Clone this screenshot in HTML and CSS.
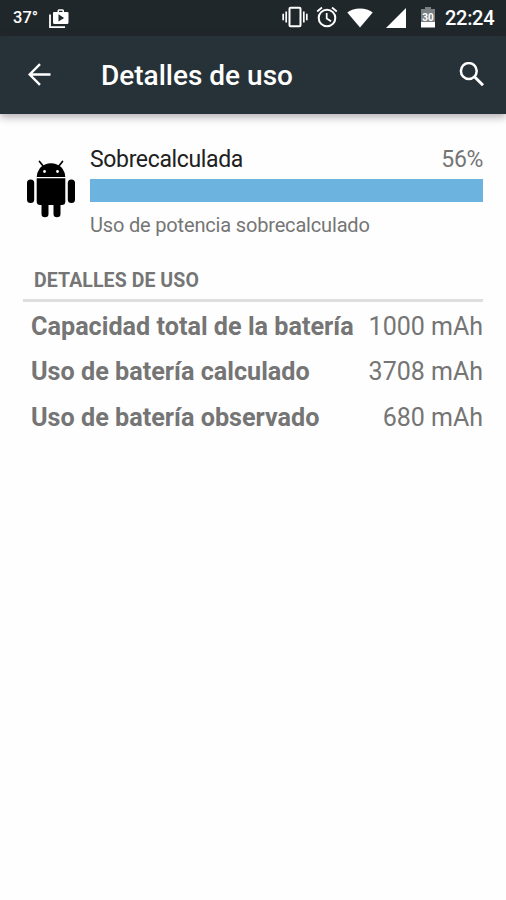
FILE: index.html
```html
<!DOCTYPE html>
<html lang="es">
<head>
<meta charset="utf-8">
<title>Detalles de uso</title>
<link rel="stylesheet" href="styles.css">
</head>
<body>
<header class="status-bar">
  <span class="temperature">37°</span>
  <svg class="store-icon" viewBox="0 0 20 20"><path d="M1 5.5V18.2H16" fill="none" stroke="#fff" stroke-width="1.8"/><path fill="#fff" fill-rule="evenodd" d="M8.5 3V1.8Q8.5.2 10 .2h3.5Q15 .2 15 1.800V3h3.500q1 0 1 1v9.500q0 1.500-1.500 1.500H5.500Q4 15 4 13.500V4q0-1 1-1zM10 3h3.500V1.700H10zM9.500 5.300v7.200l5.600-3.600z"/></svg>
  <div class="status-icons">
    <svg class="vibrate-icon" viewBox="0 0 26 22"><path d="M1.200 7.800v6.400M4.200 5.500v11M21.800 5.500v11M24.800 7.800v6.400" stroke="#fff" stroke-width="1.700"/><rect x="7.500" y="1.800" width="11" height="18.400" rx="1" fill="none" stroke="#fff" stroke-width="2"/></svg>
    <svg class="alarm-icon" viewBox="0 0 22 22"><circle cx="11" cy="12" r="8.300" fill="none" stroke="#fff" stroke-width="2"/><path d="M1.200 5.500L6 1.500M20.800 5.500L16 1.500M10.700 7v5.500l4.300 2.700" fill="none" stroke="#fff" stroke-width="1.700"/></svg>
    <svg class="wifi-icon" viewBox="0 0 26 20"><path d="M.3 4.500Q5.500.4 13 .4t12.700 4.100L13 19.600z" fill="#fff"/></svg>
    <svg class="signal-icon" viewBox="0 0 20 20"><path d="M20 0v20H0z" fill="#fff"/></svg>
    <svg class="battery-icon" viewBox="0 0 14 21"><path d="M4 0h6v2h4v13H0V2h4z" fill="#7b8083"/><path d="M0 15h14v5.500H0z" fill="#fff"/><text class="battery-level" x="7" y="14">30</text></svg>
  </div>
  <time class="clock">22:24</time>
</header>
<nav class="app-bar">
  <svg class="back-icon" viewBox="0 0 24 24"><path d="M23.500 11.500H2.500M13 1.200L2.700 11.500 13 21.800" fill="none" stroke="#fff" stroke-width="2.400"/></svg>
  <h1 class="title">Detalles de uso</h1>
  <svg class="search-icon" viewBox="0 0 26 26"><circle cx="9.800" cy="9" r="7.900" fill="none" stroke="#fff" stroke-width="2.500"/><path d="M15.500 14.800l8.500 8.500" stroke="#fff" stroke-width="3"/></svg>
</nav>
<main class="content">
  <section class="summary">
    <svg class="android-icon" viewBox="0 0 48 58"><path d="M12.500 1.500l4 5M35.500 1.500l-4 5" stroke="#000" stroke-width="1.700" stroke-linecap="round"/><path d="M9.700 17Q10.200 8 18 4.500q6-2.300 12 0Q37.800 8 38.300 17z"/><rect y="19.500" width="7.200" height="23.500" rx="3.500"/><rect x="40.800" y="19.500" width="7.200" height="23.500" rx="3.500"/><path d="M9.700 18.200h28.600v23.300q0 3.500-3.500 3.500H33.500v9q0 3.300-3.500 3.300T26.500 54v-9h-5v9q0 3.300-3.500 3.300T14.500 54v-9h-1.300Q9.700 45 9.700 41.500z"/><circle cx="17.500" cy="11.500" r="1.400" fill="#fff"/><circle cx="30.500" cy="11.500" r="1.400" fill="#fff"/></svg>
    <div class="usage">
      <div class="usage-head"><span class="usage-name">Sobrecalculada</span><span class="usage-percent">56%</span></div>
      <div class="usage-bar"></div>
      <p class="usage-note">Uso de potencia sobrecalculado</p>
    </div>
  </section>
  <h2 class="section-title">DETALLES DE USO</h2>
  <dl class="details">
    <div class="row"><dt>Capacidad total de la batería</dt><dd>1000 mAh</dd></div>
    <div class="row"><dt>Uso de batería calculado</dt><dd>3708 mAh</dd></div>
    <div class="row"><dt>Uso de batería observado</dt><dd>680 mAh</dd></div>
  </dl>
</main>
</body>
</html>
```
FILE: styles.css
```css
* { box-sizing: border-box; margin: 0; padding: 0; }
body { background: #fefefe; font-family: Roboto, sans-serif; color: #757575; min-height: 900px; }
svg { display: block; flex: none; }
.status-bar { height: 36px; background: #20272b; color: #fff; display: flex; align-items: flex-start; padding: 0 12px 0 13px; }
.temperature { width: 36px; font-size: 16.500px; font-weight: 500; line-height: 36px; }
.store-icon { width: 20px; height: 20px; margin-top: 9px; }
.status-icons { margin-left: auto; display: flex; align-items: flex-start; }
.vibrate-icon { width: 26px; height: 22px; margin-top: 6px; }
.alarm-icon { width: 22px; height: 22px; margin: 6px 0 0 8px; }
.wifi-icon { width: 26px; height: 20px; margin: 8px 0 0 9px; }
.signal-icon { width: 20px; height: 20px; margin: 8px 0 0 13px; }
.battery-icon { width: 14px; height: 21px; margin: 7px 0 0 15px; }
.battery-level { font-size: 10px; font-weight: 700; fill: #fff; text-anchor: middle; }
.clock { margin-left: 10px; width: 49px; font-size: 20px; font-weight: 500; letter-spacing: -.3px; line-height: 37px; white-space: nowrap; }
.app-bar { height: 78px; background: #263238; display: flex; align-items: center; padding: 0 21px 0 27px; color: #fff; box-shadow: 0 3px 8px rgba(50, 35, 50, .38); }
.back-icon { width: 24px; height: 24px; }
.title { margin-left: 50px; padding-top: 2px; font-size: 28px; font-weight: 500; line-height: 34px; white-space: nowrap; }
.search-icon { width: 26px; height: 26px; margin-left: auto; }
.content { padding: 32px 23px 0; }
.summary { display: flex; padding-left: 4px; height: 120px; }
.android-icon { width: 48px; height: 58px; margin-top: 14px; }
.usage { flex: 1; margin-left: 15px; }
.usage-head { display: flex; justify-content: space-between; font-size: 23px; letter-spacing: -.35px; line-height: 28px; height: 33px; }
.usage-name { color: #212121; }
.usage-bar { height: 23px; background: #6db3e0; }
.usage-note { margin-top: 11px; font-size: 20px; letter-spacing: -.17px; line-height: 24px; white-space: nowrap; }
.section-title { height: 36px; padding-left: 11px; font-size: 19.500px; font-weight: 700; letter-spacing: .08px; line-height: 29px; border-bottom: 3px solid #dedede; white-space: nowrap; }
.details { padding: 2px 0 0 8px; }
.row { display: flex; justify-content: space-between; height: 45.300px; line-height: 46px; font-size: 25px; white-space: nowrap; }
.row dt { font-size: 25.200px; font-weight: 700; }
```
